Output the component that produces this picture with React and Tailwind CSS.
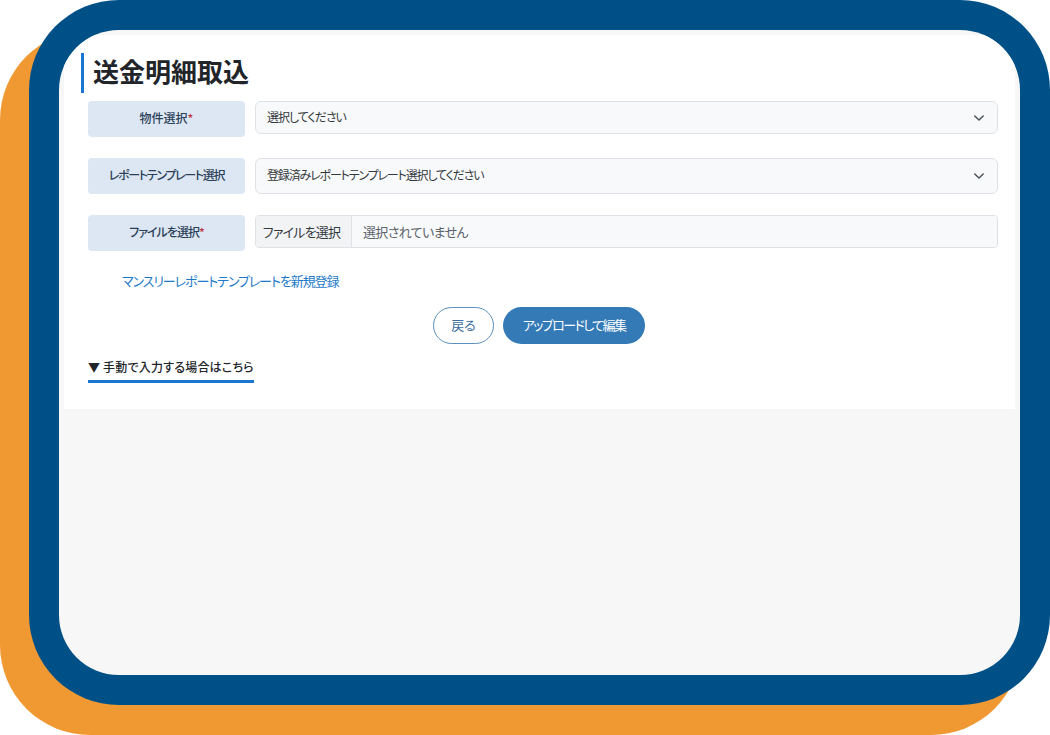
import React from "react";

const F = "font-['Noto_Sans_CJK_JP','Noto_Sans_CJK_SC',sans-serif] [font-feature-settings:'palt']";

function Chevron() {
  return (
    <svg className="w-3 h-3" viewBox="0 0 12 12" fill="none" stroke="#495057" strokeWidth="1.5" strokeLinecap="round" strokeLinejoin="round">
      <path d="M1.8 4l4.2 4 4.2-4" />
    </svg>
  );
}

function Label({ children, req, track }) {
  return (
    <div className={`w-[157px] shrink-0 h-[36px] rounded bg-[#dce7f3] flex items-center justify-center pb-[2px] text-[12px] font-medium text-[#2a4058] ${track}`}>
      <span>{children}</span>
      {req && <span className="text-[#c0323f]">*</span>}
    </div>
  );
}

function Select({ text, h, track }) {
  return (
    <div className={`flex-1 ${h} rounded-md border border-[#dee2e6] bg-[#f8f9fa] flex items-center justify-between pl-[11px] pr-[12px] text-[12px] text-[#33383d]`}>
      <span className={`-mt-[2px] ${track}`}>{text}</span>
      <Chevron />
    </div>
  );
}

export default function App() {
  return (
    <div className={`w-[1050px] h-[735px] bg-white overflow-hidden ${F}`}>
      <div className="ml-[29px] w-[1021px] h-[705px] rounded-[90px] shadow-[-29px_30px_0_#f09933] bg-[#005088] p-[30px]">
        <div className="h-full rounded-[60px] overflow-hidden bg-[#f7f7f7] px-[5px] pt-[5px]">
          <div className="h-[374px] bg-white pl-[17px] pr-[17px] pt-[18px]">
            <h1 className="h-[40px] border-l-[3px] border-[#1a76d2] pl-[9px] text-[26px] leading-[36px] font-bold text-[#212529]">送金明細取込</h1>
            <div className="ml-[7px] mt-[8px] flex gap-[10px] items-start">
              <Label req>物件選択</Label>
              <Select text="選択してください" h="h-[33px]" track="tracking-[-1px]" />
            </div>
            <div className="ml-[7px] mt-[21px] flex gap-[10px] items-start">
              <Label track="tracking-[-1.3px]">レポートテンプレート選択</Label>
              <Select text="登録済みレポートテンプレート選択してください" h="h-[36px]" track="tracking-[-1.15px]" />
            </div>
            <div className="ml-[7px] mt-[21px] flex gap-[10px] items-start">
              <Label req track="tracking-[-1px]">ファイルを選択</Label>
              <div className="flex-1 h-[33px] rounded border border-[#dee2e6] flex items-center text-[13px] overflow-hidden">
                <div className="h-full w-[96px] shrink-0 bg-[#f1f3f5] border-r border-[#dee2e6] flex items-center justify-center pr-[4px] text-[#33383d] tracking-[-0.8px]">ファイルを選択</div>
                <div className="pl-[11px] flex-1 h-full flex items-center bg-[#f8f9fa] text-[#5c636a] tracking-[-0.65px]">選択されていません</div>
              </div>
            </div>
            <a className="block ml-[41px] mt-[20px] text-[13px] leading-[20px] text-[#1e7ac8] tracking-[-1.08px]">マンスリーレポートテンプレートを新規登録</a>
            <div className="mt-[16px] flex justify-center gap-[9px] pr-[1px]">
              <button className="w-[61px] h-[37px] rounded-full border border-[#5a8fbd] bg-white text-[13px] text-[#3a6f9f] pb-[2px]">戻る</button>
              <button className="w-[142px] h-[37px] rounded-full bg-[#337ab7] text-[13px] text-white pb-[2px] tracking-[-1.6px]">アップロードして編集</button>
            </div>
            <div className="ml-[7px] mt-[9px] w-[166px] h-[30px] border-b-[3px] border-[#1a76d2] text-[12px] leading-[28px] font-medium text-[#212529] whitespace-nowrap tracking-[0.2px]">▼ 手動で入力する場合はこちら</div>
          </div>
        </div>
      </div>
    </div>
  );
}
